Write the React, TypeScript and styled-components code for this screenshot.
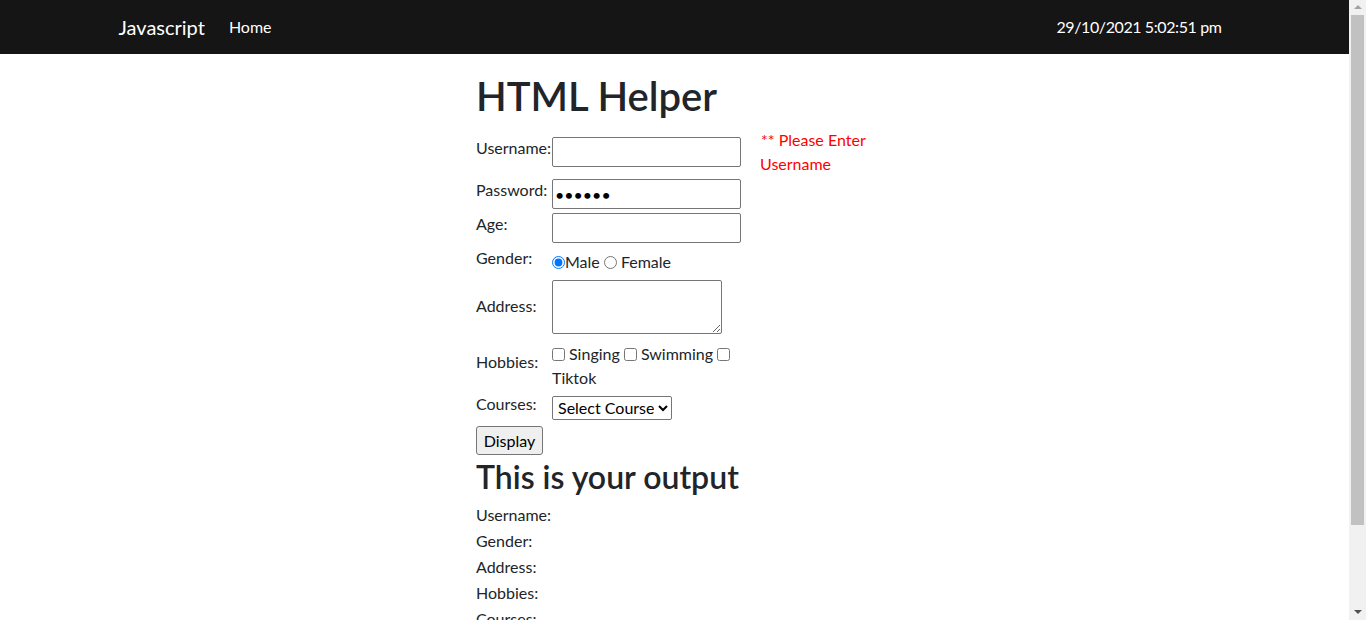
import React from "react";
import styled, { createGlobalStyle } from "styled-components";

const Global = createGlobalStyle`
  html, body { height: 100%; }
  body {
    margin: 0;
    font-family: "Lato", "Segoe UI", "Noto Sans", sans-serif;
    font-size: 16px;
    line-height: 1.5;
    color: #212529;
    background: #fff;
    overflow: hidden;
  }
  * { box-sizing: border-box; }
`;

const Shell = styled.div`
  display: flex;
  height: 100vh;
  overflow: hidden;
`;

const Page = styled.div`
  flex: 1;
  min-width: 0;
  overflow: hidden;
`;

const ScrollBar = styled.div`
  width: 17px;
  flex: none;
  display: flex;
  flex-direction: column;
  background: #f1f1f1;
`;

const ScrollArrow = styled.div<{ $down?: boolean }>`
  flex: none;
  height: ${(p) => (p.$down ? "17px" : "15px")};
  display: flex;
  align-items: center;
  justify-content: center;
  &::before {
    content: "";
    width: 0;
    height: 0;
    border-left: 4px solid transparent;
    border-right: 4px solid transparent;
    ${(p) =>
      p.$down
        ? "border-top: 4px solid #505050; margin-top: 1px;"
        : "border-bottom: 4px solid #a3a3a3; margin-top: -2px;"}
  }
`;

const Track = styled.div`
  flex: 1;
  padding: 0 2px;
`;

const Thumb = styled.div`
  height: 510px;
  background: #c1c1c1;
`;

const NavBar = styled.nav`
  background: #151515;
  height: 54px;
`;

const NavInner = styled.div`
  max-width: 1140px;
  height: 100%;
  margin: 0 auto;
  padding: 0 23px 0 14px;
  display: flex;
  align-items: center;
`;

const Brand = styled.a`
  color: #fff;
  font-size: 20px;
  margin-right: 24px;
  text-decoration: none;
  padding-bottom: 1px;
`;

const NavLink = styled.a`
  color: #fff;
  font-size: 16px;
  text-decoration: none;
`;

const Clock = styled.span`
  margin-left: auto;
  color: #fff;
  font-size: 16px;
  letter-spacing: -0.4px;
`;

const Main = styled.main`
  width: 397px;
  margin: 0 auto;
  padding: 18px 0 80px;
`;

const Title = styled.h1`
  font-size: 40px;
  font-weight: 600;
  line-height: 1.2;
  margin: 0 0 8px;
`;

const SubTitle = styled.h2`
  font-size: 32px;
  font-weight: 600;
  line-height: 1.2;
  margin: 0 0 7px;
`;

const FormGrid = styled.div`
  display: grid;
  grid-template-columns: 76px 208px 114px;
  align-items: center;
  margin: -1px 0 0 -1px;
`;

const Cell = styled.div`
  padding: 1px;
`;

const Label = styled.label`
  display: inline-block;
  margin-bottom: 8px;
  white-space: nowrap;
`;

const TextInput = styled.input`
  display: block;
  width: 189px;
  height: 30px;
  padding: 1px 2px;
  border: 1px solid #767676;
  border-radius: 2px;
  font: inherit;
  font-size: 16px;
  color: #000;
`;

const TextArea = styled.textarea`
  display: block;
  width: 170px;
  height: 54px;
  margin-bottom: 6px;
  padding: 1px 2px;
  border: 1px solid #767676;
  border-radius: 2px;
  font: inherit;
`;

const Choice = styled.input<{ $gap?: boolean }>`
  width: 13px;
  height: 13px;
  margin: 0 ${(p) => (p.$gap ? "4px" : "0")} 0 0;
  vertical-align: -1px;
`;

const Select = styled.select`
  width: 120px;
  height: 24px;
  font: inherit;
  font-size: 16px;
  color: #000;
  border: 1px solid #767676;
  border-radius: 2px;
  background: #fff;
  padding: 0 1px;
`;

const ErrorText = styled.span`
  color: #ff0000;
  padding-left: 1px;
`;

const ButtonRow = styled.div`
  padding: 1px 0 3px;
`;

const Button = styled.button`
  display: block;
  height: 29px;
  width: 67px;
  padding: 1px 6px;
  font: inherit;
  font-size: 16px;
  color: #000;
  background: #efefef;
  border: 1px solid #767676;
  border-radius: 3px;
`;

const OutputLine = styled.div`
  margin-bottom: 2px;
`;

export default function App() {
  return (
    <>
      <Global />
      <Shell>
        <Page>
          <NavBar>
            <NavInner>
              <Brand href="#">Javascript</Brand>
              <NavLink href="#">Home</NavLink>
              <Clock>29/10/2021 5:02:51 pm</Clock>
            </NavInner>
          </NavBar>
          <Main>
            <Title>HTML Helper</Title>
            <FormGrid>
              <Cell><Label>Username:</Label></Cell>
              <Cell><TextInput type="text" /></Cell>
              <Cell><ErrorText>** Please Enter Username</ErrorText></Cell>

              <Cell><Label>Password:</Label></Cell>
              <Cell><TextInput type="password" defaultValue="123456" /></Cell>
              <Cell />

              <Cell><Label>Age:</Label></Cell>
              <Cell><TextInput type="text" /></Cell>
              <Cell />

              <Cell><Label>Gender:</Label></Cell>
              <Cell>
                <Choice type="radio" name="g" defaultChecked />Male <Choice type="radio" name="g" $gap />Female
              </Cell>
              <Cell />

              <Cell><Label>Address:</Label></Cell>
              <Cell><TextArea /></Cell>
              <Cell />

              <Cell><Label>Hobbies:</Label></Cell>
              <Cell>
                <Choice type="checkbox" $gap />Singing <Choice type="checkbox" $gap />Swimming <Choice type="checkbox" $gap />Tiktok
              </Cell>
              <Cell />

              <Cell><Label>Courses:</Label></Cell>
              <Cell>
                <Select defaultValue="">
                  <option value="">Select Course</option>
                </Select>
              </Cell>
              <Cell />
            </FormGrid>
            <ButtonRow>
              <Button>Display</Button>
            </ButtonRow>
            <SubTitle>This is your output</SubTitle>
            <OutputLine>Username:</OutputLine>
            <OutputLine>Gender:</OutputLine>
            <OutputLine>Address:</OutputLine>
            <OutputLine>Hobbies:</OutputLine>
            <OutputLine>Courses:</OutputLine>
          </Main>
        </Page>
        <ScrollBar>
          <ScrollArrow />
          <Track>
            <Thumb />
          </Track>
          <ScrollArrow $down />
        </ScrollBar>
      </Shell>
    </>
  );
}
